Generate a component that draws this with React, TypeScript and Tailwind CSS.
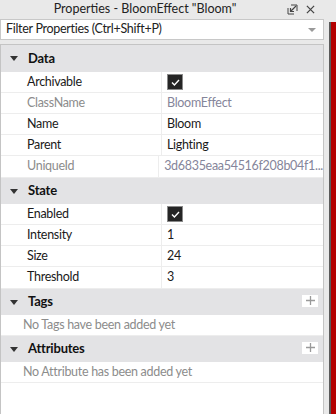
import { ReactNode } from 'react';

const font = { fontFamily: 'Lato, "Noto Sans", sans-serif' };

type Prop = { label: string; value?: string; check?: boolean; dim?: boolean };

const sections: { title: string; props: Prop[] }[] = [
  {
    title: 'Data',
    props: [
      { label: 'Archivable', check: true },
      { label: 'ClassName', value: 'BloomEffect', dim: true },
      { label: 'Name', value: 'Bloom' },
      { label: 'Parent', value: 'Lighting' },
      { label: 'UniqueId', value: '3d6835eaa54516f208b04f1...', dim: true },
    ],
  },
  {
    title: 'State',
    props: [
      { label: 'Enabled', check: true },
      { label: 'Intensity', value: '1' },
      { label: 'Size', value: '24' },
      { label: 'Threshold', value: '3' },
    ],
  },
];

function Caret() {
  return (
    <svg width="8" height="5" viewBox="0 0 8 5" className="shrink-0">
      <path d="M0 0h8L4 5z" fill="#333" />
    </svg>
  );
}

function Header({ title, add, tall }: { title: string; add?: boolean; tall?: boolean }) {
  return (
    <div className={`flex items-center ${tall ? 'h-[27px]' : 'h-[26px]'} bg-[#e3e3e5] pl-[9px] pr-[5px]`}>
      <Caret />
      <span className="ml-[10px] text-[13px] font-bold text-[#111] tracking-[-0.2px]">{title}</span>
      {add && (
        <div className="ml-auto mb-[3px] w-[16px] h-[12px] bg-white flex items-center justify-center">
          <svg width="9" height="9" viewBox="0 0 9 9">
            <path d="M4.5 0v9M0 4.5h9" stroke="#9a9a9a" strokeWidth="1.3" />
          </svg>
        </div>
      )}
    </div>
  );
}

function Check() {
  return (
    <div className="w-[16px] h-[16px] bg-[#252525] border border-[#8a8a8a] flex items-center justify-center">
      <svg width="9" height="7" viewBox="0 0 9 7">
        <path d="M1 3.5l2.4 2.4L8 1" stroke="#fff" strokeWidth="1.4" fill="none" />
      </svg>
    </div>
  );
}

function Row({ p }: { p: Prop }) {
  const label = p.dim ? 'text-[#8c8c8c]' : 'text-[#1a1a1a]';
  const value = p.dim ? 'text-[#85859a]' : 'text-[#1a1a1a]';
  return (
    <div className="flex h-[21px] last:h-[22px] border-b border-[#ededed] text-[12.5px] tracking-[-0.3px]">
      <div className={`w-[161px] pl-[26px] flex items-center border-r border-[#ededed] ${label}`}>{p.label}</div>
      <div className={`flex-1 pl-[5px] flex items-center ${value}`}>
        {p.check ? <Check /> : p.value}
      </div>
    </div>
  );
}

function Empty({ children }: { children: ReactNode }) {
  return (
    <div className="h-[21px] pl-[22px] flex items-center border-b border-[#ededed] text-[12.5px] tracking-[-0.3px] text-[#8c8c8c]">
      {children}
    </div>
  );
}

export default function App() {
  return (
    <div className="w-[336px] h-[414px] bg-[#e9e9e9] flex overflow-hidden" style={font}>
      <div className="w-[324px] flex flex-col">
        <div className="h-[19px] flex items-center relative">
          <div className="flex-1 text-center text-[12.5px] text-[#222] pr-[34px]">
            Properties - BloomEffect &quot;Bloom&quot;
          </div>
          <div className="absolute right-[9px] top-[4px] flex items-center gap-[8px]">
            <svg width="11" height="11" viewBox="0 0 11 11">
              <path d="M1 4v6h6M4 1h6v6" stroke="#444" strokeWidth="1" fill="none" />
              <path d="M9 2L3.5 7.5M3.5 4v3.5H7" stroke="#444" strokeWidth="1.2" fill="none" />
            </svg>
            <svg width="9" height="9" viewBox="0 0 10 10">
              <path d="M1 1l8 8M9 1l-8 8" stroke="#444" strokeWidth="1.4" />
            </svg>
          </div>
        </div>
        <div className="h-[21px] bg-white border border-[#c8c8c8] flex items-center pl-[5px] pr-[7px] text-[12.5px] tracking-[-0.3px] text-[#222]">
          <span>Filter Properties (Ctrl+Shift+P)</span>
          <svg width="8" height="4" viewBox="0 0 8 4" className="ml-auto">
            <path d="M0 0h8L4 4z" fill="#9a9a9a" />
          </svg>
        </div>
        <div className="mt-[4px] flex-1 bg-white border border-[#c4c4c4] border-b-0">
          {sections.map((s, i) => (
            <div key={s.title}>
              <Header title={s.title} tall={i === 0} />
              {s.props.map((p) => (
                <Row key={p.label} p={p} />
              ))}
            </div>
          ))}
          <Header title="Tags" add />
          <Empty>No Tags have been added yet</Empty>
          <Header title="Attributes" add />
          <Empty>No Attribute has been added yet</Empty>
        </div>
      </div>
      <div className="flex-1 flex flex-col">
        <div className="h-[22px]" />
        <div className="flex-1 ml-[5px] border-l-2 border-[#5a5a5a] bg-[#b30000]" />
      </div>
    </div>
  );
}
